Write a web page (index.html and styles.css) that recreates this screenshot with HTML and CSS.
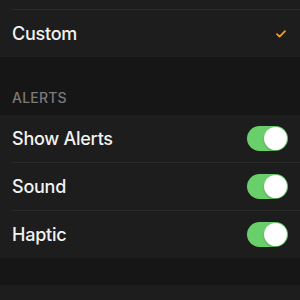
FILE: index.html
```html
<!DOCTYPE html>
<html>
<head>
<meta charset="utf-8">
<link rel="stylesheet" href="styles.css">
</head>
<body>
<div class="group">
  <div class="row"><div class="inner top"></div></div>
  <div class="row"><div class="inner last">
    <span class="label">Custom</span>
    <svg class="check" width="10" height="8" viewBox="0 0 10 8"><path d="M1 4.2 L3.6 6.6 L9 1.2" fill="none" stroke="#f0a030" stroke-width="1.7" stroke-linecap="round" stroke-linejoin="round"/></svg>
  </div></div>
</div>
<div class="header">ALERTS</div>
<div class="group">
  <div class="row"><div class="inner">
    <span class="label">Show Alerts</span><span class="toggle"><span class="knob"></span></span>
  </div></div>
  <div class="row"><div class="inner">
    <span class="label">Sound</span><span class="toggle"><span class="knob"></span></span>
  </div></div>
  <div class="row"><div class="inner last">
    <span class="label">Haptic</span><span class="toggle"><span class="knob"></span></span>
  </div></div>
</div>
<div class="spacer"></div>
<div class="group">
  <div class="row"><div class="inner end"></div></div>
</div>
</body>
</html>
```
FILE: styles.css
```css
html, body {
  margin: 0;
  padding: 0;
  background: #161616;
  font-family: Inter, "Liberation Sans", sans-serif;
  overflow: hidden;
  height: 300px;
}
.group {
  background: #1d1d1d;
}
.row {
  padding-left: 12px;
}
.inner {
  height: 47px;
  display: flex;
  align-items: center;
  justify-content: space-between;
  padding-right: 12px;
  border-bottom: 1px solid #2a2a2a;
}
.inner.top {
  height: 9px;
}
.inner.last {
  border-bottom: none;
}
.inner.end {
  height: 15px;
  border-bottom: none;
}
.label {
  color: #f2f2f2;
  font-size: 18px;
  font-weight: 500;
  letter-spacing: -0.25px;
}
.check {
  display: block;
  margin-right: 2px;
}
.header {
  height: 58px;
  box-sizing: border-box;
  padding: 0 12px 9px;
  display: flex;
  align-items: flex-end;
  color: #7a7a7a;
  font-size: 14px;
  font-weight: 500;
  letter-spacing: 0.2px;
}
.toggle {
  width: 41px;
  height: 25px;
  border-radius: 13px;
  background: #68cf6b;
  display: flex;
  justify-content: flex-end;
  align-items: center;
  padding-right: 1px;
  box-sizing: border-box;
}
.knob {
  width: 23px;
  height: 23px;
  border-radius: 50%;
  background: #fff;
  box-shadow: 0 1px 2px rgba(0,0,0,0.25);
}
.spacer {
  height: 27px;
}
```
